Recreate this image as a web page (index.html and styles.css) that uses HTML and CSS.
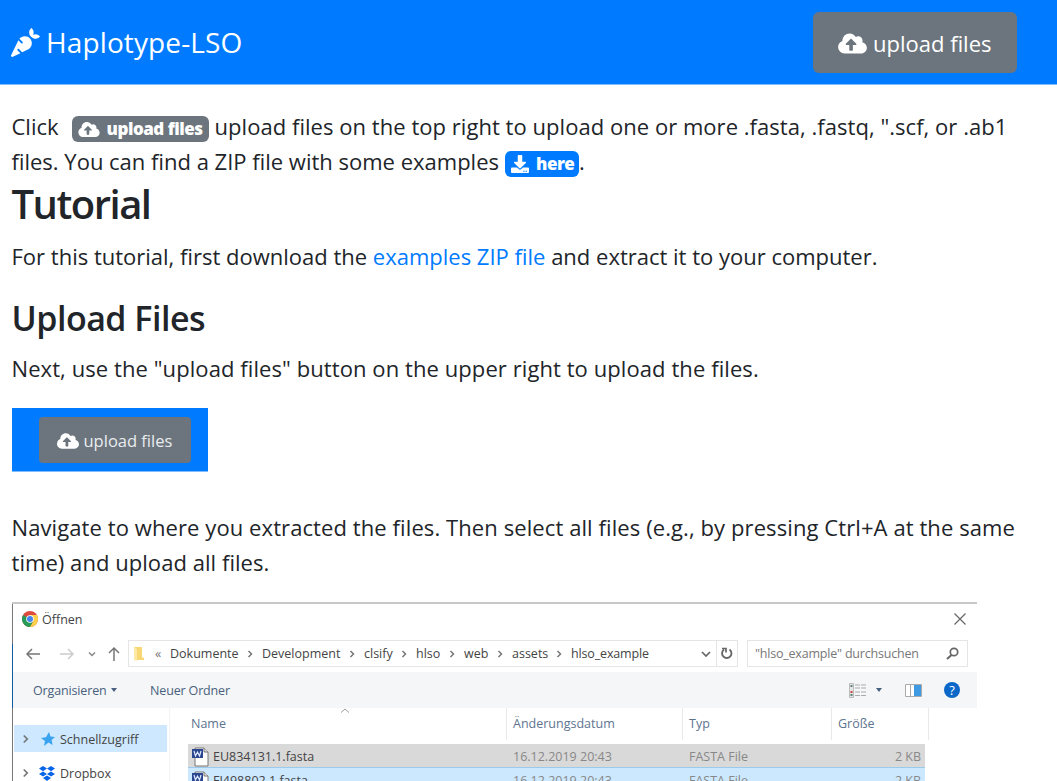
FILE: index.html
```html
<!DOCTYPE html>
<html lang="en">
<head>
<meta charset="utf-8">
<title>Haplotype-LSO</title>
<link rel="stylesheet" href="styles.css">
</head>
<body>
<svg class="defs" width="0" height="0">
  <symbol id="cloud" viewBox="0 0 640 512"><path d="M537.6 226.6c4.1-10.7 6.4-22.4 6.4-34.6 0-53-43-96-96-96-19.7 0-38.1 6-53.3 16.2C367 64.2 315.3 32 256 32c-88.4 0-160 71.6-160 160 0 2.7.1 5.4.2 8.1C40.2 219.8 0 273.2 0 336c0 79.5 64.5 144 144 144h368c70.7 0 128-57.3 128-128 0-61.9-44-113.6-102.4-125.4zM393.4 288H328v112c0 8.8-7.2 16-16 16h-48c-8.8 0-16-7.2-16-16V288h-65.4c-14.3 0-21.4-17.2-11.3-27.3l105.4-105.4c6.2-6.2 16.4-6.2 22.6 0l105.4 105.4c10.1 10.1 2.9 27.3-11.3 27.3z"/></symbol>
  <symbol id="sep" viewBox="0 0 6 8"><path d="M1.5 1 4.5 4 1.5 7" fill="none" stroke="#777" stroke-width="1.5"/></symbol>
  <symbol id="doc" viewBox="0 0 18 20"><path d="M4 1h9l4 4v14H4z" fill="#fff" stroke="#777"/><path d="M13 1v4h4" fill="#ddd" stroke="#777"/><path d="M1 2h11v9H1z" fill="#2b478f"/><path d="m3 4 1.5 5L6.5 5l2 4L10 4" fill="none" stroke="#dfe8ff" stroke-width="1.2"/></symbol>
</svg>
<header class="navbar">
  <div class="brand">
    <svg class="carrot" viewBox="0 0 512 512"><path d="M298.2 156.6c-52.7-25.7-114.5-10.5-150.2 32.8l55.2 55.2c6.3 6.3 6.3 16.4 0 22.6-3.1 3.1-7.2 4.7-11.3 4.7s-8.2-1.6-11.3-4.7L130.4 217 2.3 479.7c-2.9 6-3.1 13.3 0 19.7 5.4 11.1 18.9 15.7 30 10.3l133.6-65.2-49.2-49.2c-6.3-6.2-6.3-16.4 0-22.6 6.3-6.2 16.4-6.2 22.6 0l57 57 102-49.8c24-11.7 44.5-31.3 57.1-57.1 30.1-61.7 4.5-136.1-57.2-166.2zm92.1-34.9C409.8 81 399.7 32.9 360 0c-50.3 41.7-52.5 107.5-7.9 151.9l8 8c44.4 44.6 110.3 42.4 151.9-7.9-32.9-39.7-81-49.8-121.7-30.3z"/></svg>
    <span class="brand-name">Haplotype-LSO</span>
  </div>
  <button class="upload"><svg class="upload-icon"><use href="#cloud"/></svg><span>upload files</span></button>
</header>
<main class="content">
  <p class="intro"><span class="t-click">Click</span><span class="badge badge-grey"><svg class="badge-cloud"><use href="#cloud"/></svg><span>upload files</span></span><span class="t-intro1">upload files on the top right to upload one or more .fasta, .fastq, ".scf, or .ab1</span><br><span class="t-intro2">files. You can find a ZIP file with some examples</span><span class="badge badge-blue"><svg class="badge-down" viewBox="0 0 512 512"><path d="M216 0h80c13.3 0 24 10.7 24 24v168h87.7c17.8 0 26.7 21.5 14.1 34.1L269.7 378.3c-7.5 7.5-19.8 7.5-27.3 0L90.1 226.1c-12.6-12.6-3.7-34.1 14.1-34.1H192V24c0-13.3 10.7-24 24-24zm296 376v112c0 13.3-10.7 24-24 24H24c-13.3 0-24-10.7-24-24V376c0-13.3 10.7-24 24-24h146.7l49 49c20.1 20.1 52.5 20.1 72.6 0l49-49H488c13.3 0 24 10.7 24 24zm-124 88c0-11-9-20-20-20s-20 9-20 20 9 20 20 20 20-9 20-20zm64 0c0-11-9-20-20-20s-20 9-20 20 9 20 20 20 20-9 20-20z"/></svg><span>here</span></span>.</p>
  <h1>Tutorial</h1>
  <p class="t-first">For this tutorial, first download the <a href="#">examples ZIP file</a> and extract it to your computer.</p>
  <h2>Upload Files</h2>
  <p class="t-next">Next, use the "upload files" button on the upper right to upload the files.</p>
  <div class="shot-button"><div class="shot-inner"><svg class="shot-cloud"><use href="#cloud"/></svg><span>upload files</span></div></div>
  <p class="navigate"><span class="t-nav1">Navigate to where you extracted the files. Then select all files (e.g., by pressing Ctrl+A at the same</span><br><span class="t-nav2">time) and upload all files.</span></p>
  <section class="dialog">
    <div class="titlebar">
      <svg class="chrome" viewBox="0 0 16 16"><circle cx="8" cy="8" r="8" fill="#dd4b3e"/><path d="M8 8 1.07 4A8 8 0 0 0 8 16l3.5-6z" fill="#279b57"/><path d="M8 16A8 8 0 0 0 14.93 4H8l3.5 6z" fill="#fcd04b"/><circle cx="8" cy="8" r="3.8" fill="#fff"/><circle cx="8" cy="8" r="3" fill="#4584ee"/></svg>
      <span class="d-open">Öffnen</span>
      <svg class="close" viewBox="0 0 12 12"><path d="m.5.5 11 11m0-11-11 11" stroke="#666" stroke-width="1.2"/></svg>
    </div>
    <div class="address-row">
      <svg class="nav-icons" viewBox="0 0 94 16" stroke-width="1.5"><path d="M15 8H2m5-5L2 8l5 5" stroke="#777"/><path d="M35 8h13m-5-5 5 5-5 5" stroke="#ccc"/><path d="m64 6.5 3 3 3-3" stroke="#888"/><path d="M89 15V2m-5 5 5-5 5 5" stroke="#777"/></svg>
      <div class="path">
        <svg class="folder" viewBox="0 0 12 15"><path d="M1 1h8v10l2 1v2H1z" fill="#f8d775"/><path d="m1 1 3 2v12l-3-1z" fill="#ffe9a6"/></svg>
        <span class="quote">«</span>
        <span class="c1">Dokumente</span><svg class="s"><use href="#sep"/></svg>
        <span class="c2">Development</span><svg class="s"><use href="#sep"/></svg>
        <span class="c3">clsify</span><svg class="s"><use href="#sep"/></svg>
        <span class="c4">hlso</span><svg class="s"><use href="#sep"/></svg>
        <span class="c5">web</span><svg class="s"><use href="#sep"/></svg>
        <span class="c6">assets</span><svg class="s"><use href="#sep"/></svg>
        <span class="c7">hlso_example</span>
        <svg class="drop" viewBox="0 0 10 6"><path d="m1 1 4 4 4-4" fill="none" stroke="#666" stroke-width="1.7"/></svg>
        <div class="reload"><svg width="12" height="13" viewBox="0 0 12 13"><path d="M8.5 2.5a4.7 4.7 0 1 1-5.500 0" fill="none" stroke="#666" stroke-width="1.8"/><path d="M1 1.5h4v4" fill="none" stroke="#666" stroke-width="1.7"/></svg></div>
      </div>
      <div class="search"><span class="d-search">"hlso_example" durchsuchen</span><svg width="13" height="13" viewBox="0 0 13 13"><circle cx="8" cy="5" r="3.7" fill="none" stroke="#666" stroke-width="1.7"/><path d="M5.5 8 1 12" stroke="#666" stroke-width="2"/></svg></div>
    </div>
    <div class="toolbar">
      <span class="d-org">Organisieren</span><svg class="caret" viewBox="0 0 6 4"><path d="M0 0h6L3 4z"/></svg>
      <span class="d-new">Neuer Ordner</span>
      <svg class="view-icon" viewBox="0 0 17 15"><path d="M.5.5h4v14h-4z" fill="#e6e6e6" stroke="#bbb"/><path d="M1.5 3h2M1.5 12h2" stroke="#568475" stroke-width="2"/><path d="M1.5 9h2" stroke="#c44" stroke-width="2"/><path d="M6 2h11M6 5h11M6 9h11M6 12.5h11" stroke="#aaa" stroke-dasharray="5 1"/></svg>
      <svg class="caret caret-view" viewBox="0 0 6 4"><path d="M0 0h6L3 4z"/></svg>
      <svg class="pane-icon" viewBox="0 0 17 13"><path d="M.5.5h16v12H.5zM5.5.5v12" fill="#fff" stroke="#aaa"/><path d="M9 1h7v11H9z" fill="#3e9be3"/></svg>
      <span class="help">?</span>
    </div>
    <div class="files">
      <aside class="side">
        <div class="side-row active"><svg class="arrow"><use href="#sep"/></svg><svg class="star" viewBox="0 0 14 14"><path d="m8 0 1.5 4.4L14 5l-3.4 3 1 5L7.5 10.6 3 14l1-5-4-3 5-.8z" fill="#39a3ed"/></svg><span class="d-quick">Schnellzugriff</span></div>
        <div class="side-row"><svg class="arrow"><use href="#sep"/></svg><svg class="dropbox" viewBox="0 0 16 15"><path d="m4 0 4 2.6-4 2.6-4-2.6zm8 0 4 2.6-4 2.6-4-2.6zM4 5.4 8 8l-4 2.6L0 8zm8 0L16 8l-4 2.6L8 8zM8 9.5l4 2.6L8 15l-4-2.9z" fill="#0865e8"/></svg><span class="d-drop">Dropbox</span></div>
      </aside>
      <div class="list">
        <svg class="sort" viewBox="0 0 10 5"><path d="m1 4.500 4-3.500 4 3.500" fill="none" stroke="#999"/></svg>
        <div class="head"><span>Name</span><span class="d-mod">Änderungsdatum</span><span>Typ</span><span>Größe</span></div>
        <div class="row grey"><span class="file"><svg><use href="#doc"/></svg><b>EU834131.1.fasta</b></span><span class="d-date">16.12.2019 20:43</span><span class="d-type">FASTA File</span><span class="size">2 KB</span></div>
        <div class="row blue"><span class="file"><svg><use href="#doc"/></svg><b>FJ498802.1.fasta</b></span><span class="d-date">16.12.2019 20:43</span><span class="d-type">FASTA File</span><span class="size">2 KB</span></div>
      </div>
    </div>
  </section>
</main>
</body>
</html>
```
FILE: styles.css
```css
* { box-sizing: border-box; }
html, body { margin: 0; height: 781px; overflow: hidden; }
body { background: #fff; color: #212529; font-family: "Open Sans", "Noto Sans", sans-serif; font-size: 22px; }
svg { display: block; flex: none; fill: currentColor; }
.defs { position: absolute; }
a { color: #007bff; text-decoration: none; }
.navbar { height: 85px; background: #007bff; border-bottom: 1px solid #80bdff; display: flex; justify-content: space-between; align-items: flex-start; padding: 12px 40px 0 11px; color: #fff; }
.brand { display: flex; align-items: center; height: 61px; gap: 6px; }
.carrot { width: 29px; height: 29px; }
.brand-name { font-size: 28px; line-height: 40px; padding-bottom: 2px; letter-spacing: 0.12px; }
.upload { width: 204px; height: 61px; border: 0; border-radius: 6px; background: #6c757d; color: #fff; display: flex; align-items: center; padding: 1px 0 0 25px; gap: 6px; font: 22px "Open Sans", sans-serif; white-space: nowrap; }
.upload-icon { width: 29px; height: 23px; }
.content { padding: 24px 12px 0 11.5px; }
p { margin: 0; line-height: 35px; white-space: nowrap; }
.badge { display: inline-flex; align-items: center; height: 26px; border-radius: 6px; color: #fff; font-weight: 800; font-size: 17px; line-height: 26px; vertical-align: top; margin-top: 7px; gap: 7px; padding: 0 6px; letter-spacing: -0.5px; }
.badge-grey { background: #6c757d; width: 137px; margin-left: 13px; margin-right: 6px; }
.badge-blue { background: #007bff; width: 74px; margin-left: 6px; }
.badge-cloud { width: 22px; height: 17px; }
.badge-down { width: 18px; height: 18px; }
.t-intro1 { letter-spacing: 0.04px; }
.t-next { letter-spacing: 0.08px; }
.t-nav1 { letter-spacing: 0.09px; }
.t-nav2 { letter-spacing: 0.05px; }
h1 { margin: 1px 0 11px; font-size: 40px; line-height: 48px; font-weight: 600; letter-spacing: -1.5px; }
h2 { margin: 23px 0 12px; font-size: 34px; line-height: 42px; font-weight: 600; letter-spacing: -0.5px; }
.shot-button { width: 196px; height: 64px; margin-top: 22px; background: #007bff; border-bottom: 1px solid #80bdff; padding: 9px 17px 0 27px; }
.shot-inner { height: 46px; border-radius: 4px; background: #6c757d; color: #e9ecef; display: flex; align-items: center; padding-left: 18px; gap: 5px; font-size: 16.5px; white-space: nowrap; padding-top: 1px; }
.shot-cloud { width: 22px; height: 18px; color: #fff; }
.navigate { margin-top: 38px; }
.dialog { width: 965px; height: 179px; overflow: hidden; margin: 22px 0 0 0.5px; border-top: 2px solid #c8c8c8; font-size: 12.5px; color: #444; white-space: nowrap; background: linear-gradient(#777 0 40px, #135c9f 40px 104px, #777 104px) 0 0 / 1px 100% no-repeat; }
.titlebar { height: 36px; display: flex; align-items: center; padding: 0 11px 6px 10px; }
.chrome { width: 16px; height: 16px; margin-right: 4px; }
.close { width: 12px; height: 12px; margin-left: auto; }
.address-row { height: 32px; display: flex; align-items: flex-start; padding-left: 13px; }
.nav-icons { width: 94px; height: 16px; margin-top: 6px; overflow: visible; fill: none; }
.path { width: 610px; height: 27px; border: 1px solid #e5e5e5; margin-left: 9px; display: flex; align-items: center; padding-left: 4px; }
.folder { width: 12px; height: 15px; }
.quote { width: 25px; padding-left: 10px; color: #777; }
.path > span:not(.quote) { flex: none; }
.s { width: 6px; height: 8px; margin-right: 9px; }
.c1 { width: 77px; }
.c2 { width: 87px; }
.c3 { width: 37px; }
.c4 { width: 33px; }
.c5 { width: 33px; }
.c6 { width: 44px; }
.c7 { letter-spacing: -0.15px; }
.drop { width: 10px; height: 6px; margin-left: auto; margin-right: 5px; }
.reload { width: 21px; height: 25px; border-left: 1px solid #e5e5e5; display: flex; align-items: center; justify-content: center; }
.search { width: 221px; height: 27px; border: 1px solid #e5e5e5; margin-left: 9px; display: flex; align-items: center; justify-content: space-between; padding: 0 8px 0 7px; color: #777; }
.d-search { letter-spacing: -0.2px; }
.toolbar { height: 36px; margin-left: 1px; background: #f5f6f7; display: flex; align-items: center; padding: 0 17px 0 20px; color: #48607d; }
.d-org { width: 78px; letter-spacing: -0.15px; }
.caret { width: 6px; height: 4px; }
.d-new { margin-left: 33px; letter-spacing: -0.15px; }
.view-icon { width: 17px; height: 15px; margin-left: auto; margin-right: 10px; }
.pane-icon { width: 17px; height: 13px; margin: 0 22px 0 23px; }
.help { width: 16px; height: 16px; border-radius: 50%; background: #0b67c8; color: #fff; text-align: center; line-height: 16px; font-size: 13px; }
.files { display: flex; }
.side { width: 158px; padding: 17px 2px 0; border-right: 1px solid #f3f3f3; }
.side-row { height: 27px; margin-bottom: 7px; display: flex; align-items: center; padding: 1px 0 0 8px; }
.active { background: #cde8ff; }
.arrow { width: 7px; height: 10px; margin-right: 12px; }
.star { width: 14px; height: 14px; margin-right: 5px; }
.dropbox { width: 16px; height: 15px; margin: 0 5px 0 -2px; }
.list { width: 760px; position: relative; padding-left: 18px; }
.sort { position: absolute; left: 170px; top: 0; width: 10px; height: 5px; }
.head, .row { display: grid; grid-template-columns: 319px 176px 149px 97px; }
.head { height: 30px; color: #5d7490; }
.head span { line-height: 32px; padding-left: 6px; border-right: 1px solid #e8e8e8; }
.head span:first-child { padding-left: 3px; }
.row { width: 737px; height: 23px; line-height: 26px; color: #888; }
.row > span { padding-left: 6px; }
.grey { margin-top: 6px; background: #d9d9d9; }
.blue { background: #cce8ff; border-top: 1px solid #9bcbea; }
.file svg { width: 18px; height: 20px; margin-right: 4px; }
.row > .file { padding-left: 3px; display: flex; align-items: center; }
.file b { font-weight: 400; color: #444; }
.row .size { padding: 0 4px 0 0; width: 93px; text-align: right; }
```
